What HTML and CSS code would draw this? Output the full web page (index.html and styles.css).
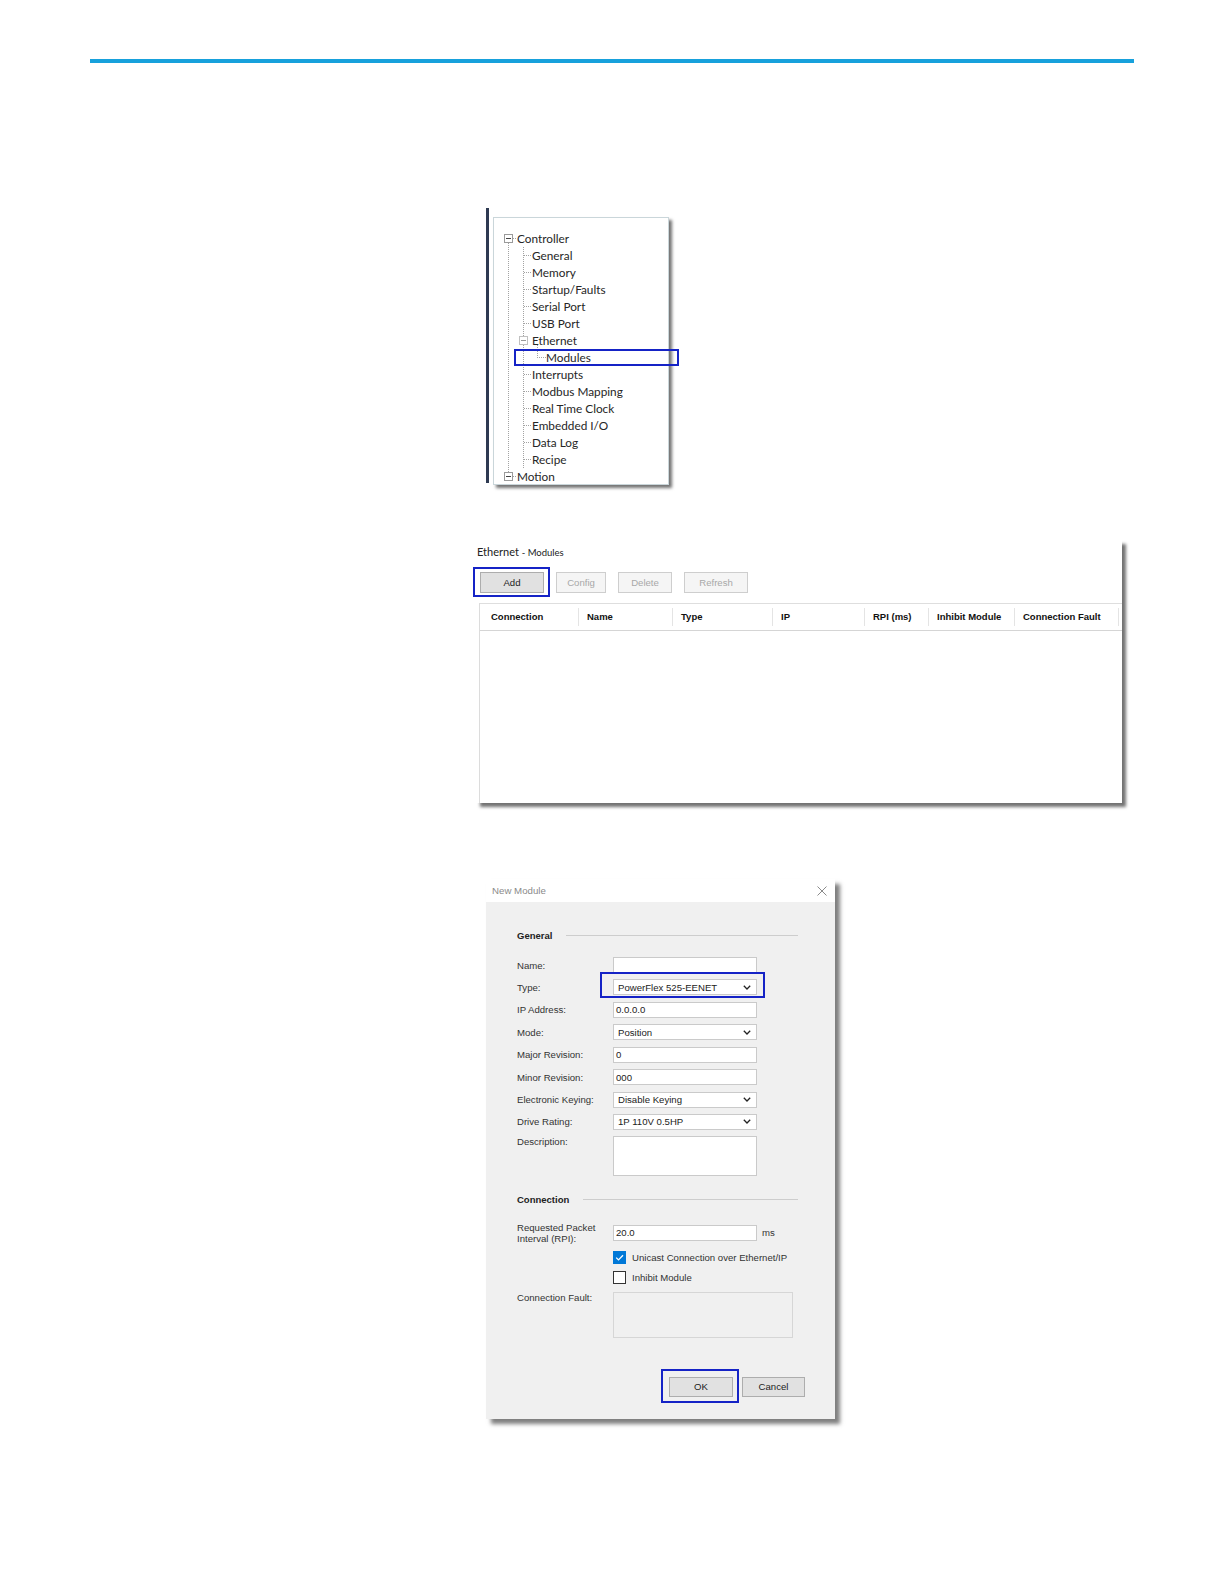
FILE: index.html
```html
<!DOCTYPE html>
<html>
  <head>
    <meta charset="UTF-8" />
    <title>Ethernet Modules</title>
    <link rel="stylesheet" href="styles.css">
  </head>
  <body>
    <div class="top-rule"></div>

    <!-- controller tree -->
    <div class="tree-figure">
      <div class="tree-bar"></div>
      <div class="tree-box">
        <div class="tree-row"><span class="expander"></span><span class="stub"></span>Controller</div>
        <div class="tree-trunk">
          <ul class="tree-list">
            <li class="tree-row"><span class="leaf"></span>General</li>
            <li class="tree-row"><span class="leaf"></span>Memory</li>
            <li class="tree-row"><span class="leaf"></span>Startup/Faults</li>
            <li class="tree-row"><span class="leaf"></span>Serial Port</li>
            <li class="tree-row"><span class="leaf"></span>USB Port</li>
            <li class="tree-row"><span class="expander sub"></span>Ethernet</li>
            <li class="tree-row callout callout-modules"><span class="elbow"></span>Modules</li>
            <li class="tree-row"><span class="leaf"></span>Interrupts</li>
            <li class="tree-row"><span class="leaf"></span>Modbus Mapping</li>
            <li class="tree-row"><span class="leaf"></span>Real Time Clock</li>
            <li class="tree-row"><span class="leaf"></span>Embedded I/O</li>
            <li class="tree-row"><span class="leaf"></span>Data Log</li>
            <li class="tree-row"><span class="leaf"></span>Recipe</li>
          </ul>
        </div>
        <div class="tree-row"><span class="expander"></span><span class="stub"></span>Motion</div>
      </div>
    </div>

    <!-- ethernet modules list -->
    <div class="modules-panel">
      <div class="panel-title">Ethernet <span class="crumb">- Modules</span></div>
      <div class="toolbar">
        <button class="btn btn-add callout callout-add">Add</button>
        <button class="btn btn-config" disabled>Config</button>
        <button class="btn btn-delete" disabled>Delete</button>
        <button class="btn btn-refresh" disabled>Refresh</button>
      </div>
      <div class="module-table">
        <div class="table-head">
          <div class="th">Connection</div>
          <div class="th">Name</div>
          <div class="th">Type</div>
          <div class="th">IP</div>
          <div class="th">RPI (ms)</div>
          <div class="th">Inhibit Module</div>
          <div class="th">Connection Fault</div>
        </div>
        <div class="table-body"></div>
      </div>
    </div>

    <!-- new module dialog -->
    <div class="dialog">
      <div class="dialog-title">
        <span>New Module</span>
        <svg class="close-icon" width="10" height="10" viewBox="0 0 10 10">
          <path d="M0.5 0.5L9.5 9.5M9.5 0.5L0.5 9.5" stroke="#8a8a8a" stroke-width="1" fill="none" />
        </svg>
      </div>
      <div class="dialog-body">
        <div class="group-head">General</div>
        <div class="fields">
          <div class="field"><label>Name:</label><div class="textbox"></div></div>
          <div class="field">
            <label>Type:</label>
            <div class="dropdown callout callout-type">PowerFlex 525-EENET
              <svg width="8" height="5" viewBox="0 0 8 5"><polyline points="0.8,0.8 4,4 7.2,0.8" stroke="#222" stroke-width="1.3" fill="none" /></svg>
            </div>
          </div>
          <div class="field"><label>IP Address:</label><div class="textbox">0.0.0.0</div></div>
          <div class="field">
            <label>Mode:</label>
            <div class="dropdown">Position
              <svg width="8" height="5" viewBox="0 0 8 5"><polyline points="0.8,0.8 4,4 7.2,0.8" stroke="#222" stroke-width="1.3" fill="none" /></svg>
            </div>
          </div>
          <div class="field"><label>Major Revision:</label><div class="textbox">0</div></div>
          <div class="field"><label>Minor Revision:</label><div class="textbox">000</div></div>
          <div class="field">
            <label>Electronic Keying:</label>
            <div class="dropdown">Disable Keying
              <svg width="8" height="5" viewBox="0 0 8 5"><polyline points="0.8,0.8 4,4 7.2,0.8" stroke="#222" stroke-width="1.3" fill="none" /></svg>
            </div>
          </div>
          <div class="field">
            <label>Drive Rating:</label>
            <div class="dropdown">1P 110V 0.5HP
              <svg width="8" height="5" viewBox="0 0 8 5"><polyline points="0.8,0.8 4,4 7.2,0.8" stroke="#222" stroke-width="1.3" fill="none" /></svg>
            </div>
          </div>
          <div class="field tall"><label>Description:</label><div class="textbox"></div></div>
        </div>

        <div class="group-head conn-head">Connection</div>
        <div class="field rpi">
          <label>Requested Packet<br />Interval (RPI):</label>
          <div class="textbox">20.0</div>
          <span class="unit">ms</span>
        </div>
        <div class="check-row first">
          <span class="checkbox checked">
            <svg width="11" height="11" viewBox="0 0 11 11"><polyline points="2.2,5.6 4.5,7.9 9,3.2" stroke="#fff" stroke-width="1.3" fill="none" /></svg>
          </span>
          Unicast Connection over Ethernet/IP
        </div>
        <div class="check-row"><span class="checkbox"></span>Inhibit Module</div>
        <div class="field fault"><label>Connection Fault:</label><div class="fault-box"></div></div>

        <div class="dialog-actions">
          <button class="btn btn-ok callout callout-ok">OK</button>
          <button class="btn btn-cancel">Cancel</button>
        </div>
      </div>
    </div>
  </body>
</html>
```

FILE: styles.css
```css
* {
  box-sizing: border-box;
}
body {
  margin: 0;
  font-family: "Liberation Sans", Arial, sans-serif;
  color: #222;
}
.top-rule {
  margin: 59px 90px 0;
  height: 4px;
  background-color: #17a1dc;
}

/* -----------------callouts-------------- */
.callout {
  position: relative;
}
.callout::after {
  content: "";
  position: absolute;
  border: 2px solid #1523c6;
  pointer-events: none;
}
.callout-modules::after {
  top: 0;
  bottom: 0;
  left: -10px;
  right: -11px;
}
.callout-add::after {
  top: -6px;
  bottom: -5px;
  left: -8px;
  right: -7px;
}
.callout-type::after {
  top: -8px;
  bottom: -4px;
  left: -14px;
  right: -9px;
}
.callout-ok::after {
  top: -9px;
  bottom: -7px;
  left: -9px;
  right: -7px;
}

/* -----------------tree-------------- */
.tree-figure {
  display: flex;
  align-items: flex-start;
  margin: 145px 0 0 486px;
}
.tree-bar {
  width: 3px;
  height: 275px;
  background-color: #2e3a52;
}
.tree-box {
  width: 176px;
  height: 268px;
  margin: 9px 0 0 4px;
  padding: 12px 0 0 10px;
  border: 1px solid #cad6da;
  background-color: #fff;
  box-shadow: 3px 3px 3px rgba(0, 0, 0, 0.55);
}
.tree-row {
  display: flex;
  align-items: center;
  height: 17px;
  font-family: Lato, "Liberation Sans", sans-serif;
  font-size: 11.8px;
  color: #262626;
  white-space: nowrap;
}
.expander {
  display: flex;
  align-items: center;
  justify-content: center;
  width: 9px;
  height: 9px;
  border: 1px solid #9a9a9a;
  background-color: #fff;
}
.expander::before {
  content: "";
  width: 5px;
  height: 1px;
  background-color: #444;
}
.expander.sub {
  margin: 0 4px 0 -5px;
  border-color: #c0c0c0;
}
.expander.sub::before {
  background-color: #999;
}
.stub {
  width: 3px;
  margin-right: 1px;
  border-top: 1px dotted #a3a3a3;
}
.tree-trunk {
  margin: -4px 0 -4px 4px;
  padding: 4px 0;
  border-left: 1px dotted #a3a3a3;
}
.tree-list {
  list-style: none;
  margin: 0 0 0 14px;
  padding: 0;
  border-left: 1px dotted #a3a3a3;
}
.leaf {
  width: 7px;
  margin-right: 1px;
  border-top: 1px dotted #a3a3a3;
}
.elbow {
  align-self: flex-start;
  width: 9px;
  height: 13px;
  margin: -4px 0 0 13px;
  border-left: 1px dotted #a3a3a3;
  border-bottom: 1px dotted #a3a3a3;
}

/* -----------------modules panel-------------- */
.modules-panel {
  display: flex;
  flex-direction: column;
  width: 646px;
  height: 263px;
  margin: 55px 0 0 476px;
  padding-top: 5px;
  background-color: #fff;
  box-shadow: 4px 4px 3px rgba(0, 0, 0, 0.55);
}
.panel-title {
  height: 14px;
  line-height: 14px;
  padding-left: 1px;
  font-family: Lato, "Liberation Sans", sans-serif;
  font-size: 11px;
  color: #222;
}
.crumb {
  font-size: 9.5px;
}
.toolbar {
  display: flex;
  gap: 12px;
  margin-top: 13px;
  padding-left: 4px;
}
.btn {
  height: 21px;
  padding: 0;
  font-family: "Liberation Sans", Arial, sans-serif;
  font-size: 9.6px;
  color: #222;
  background-color: #e1e1e1;
  border: 1px solid #adadad;
  border-radius: 0;
}
.btn:disabled {
  color: #a8a8a8;
  background-color: #f5f5f5;
  border-color: #cecece;
}
.btn-add,
.btn-refresh {
  width: 64px;
}
.btn-config {
  width: 50px;
}
.btn-delete {
  width: 54px;
}
.module-table {
  flex: 1;
  display: flex;
  flex-direction: column;
  margin: 10px 0 0 3px;
  border-left: 1px solid #dcdcdc;
}
.table-head {
  display: grid;
  grid-template-columns: 99px 94px 100px 92px 64px 86px 104px;
  height: 28px;
  padding: 4px 0;
  border-top: 1px solid #dedede;
  border-bottom: 1px solid #d5d5d5;
}
.th {
  padding-left: 8px;
  line-height: 18px;
  font-size: 9.5px;
  font-weight: bold;
  color: #111;
  border-right: 1px solid #e4e4e4;
  white-space: nowrap;
}
.th:first-child {
  padding-left: 11px;
}
.table-body {
  flex: 1;
}

/* -----------------dialog-------------- */
.dialog {
  width: 349px;
  margin: 76px 0 40px 486px;
  background-color: #fff;
  box-shadow: 5px 5px 4px rgba(0, 0, 0, 0.5);
}
.dialog-title {
  display: flex;
  align-items: center;
  justify-content: space-between;
  height: 23px;
  padding: 0 8px 0 6px;
  font-size: 9.7px;
  color: #8a8a8a;
}
.dialog-body {
  padding: 27px 37px 22px 31px;
  background-color: #f0f0f0;
  font-size: 9.6px;
  color: #333;
}
.group-head {
  display: flex;
  align-items: center;
  height: 12px;
  font-size: 9.5px;
  font-weight: bold;
  color: #222;
}
.group-head::after {
  content: "";
  flex: 1;
  height: 1px;
  margin-left: 14px;
  background-color: #cdcdcd;
}
.conn-head {
  margin-top: 17px;
}
.fields {
  margin-top: 16px;
}
.field {
  display: flex;
  align-items: center;
  height: 16px;
}
.field + .field {
  margin-top: 6.43px;
}
.field label {
  flex: none;
  width: 96px;
  line-height: 11px;
}
.textbox,
.dropdown {
  display: flex;
  align-items: center;
  width: 144px;
  height: 16px;
  padding: 0 2px;
  border: 1px solid #cacaca;
  background-color: #fff;
  color: #222;
  white-space: nowrap;
}
.dropdown {
  justify-content: space-between;
  padding: 0 5px 0 4px;
}
.field.tall {
  height: 40px;
  align-items: flex-start;
}
.field.tall .textbox {
  height: 40px;
}
.field.rpi {
  height: 22px;
  margin-top: 17px;
  align-items: flex-start;
}
.field.rpi .textbox {
  margin-top: 2.5px;
}
.unit {
  margin: 5px 0 0 5px;
  line-height: 11px;
}
.check-row {
  display: flex;
  align-items: center;
  height: 16px;
  margin: 4px 0 0 96px;
  color: #333;
}
.check-row.first {
  margin-top: 5px;
}
.checkbox {
  display: flex;
  align-items: center;
  justify-content: center;
  width: 13px;
  height: 13px;
  margin-right: 6px;
  border: 1px solid #333;
  background-color: #fff;
}
.checkbox.checked {
  border-color: #0078d7;
  background-color: #0078d7;
}
.field.fault {
  height: 46px;
  margin-top: 6.5px;
  align-items: flex-start;
}
.fault-box {
  width: 180px;
  height: 46px;
  border: 1px solid #d6d6d6;
  background-color: #f0f0f0;
}
.dialog-actions {
  display: flex;
  justify-content: flex-end;
  gap: 9px;
  margin: 39px -7px 0 0;
}
.btn-ok,
.btn-cancel {
  height: 20px;
}
.btn-ok {
  width: 64px;
}
.btn-cancel {
  width: 63px;
}
```
